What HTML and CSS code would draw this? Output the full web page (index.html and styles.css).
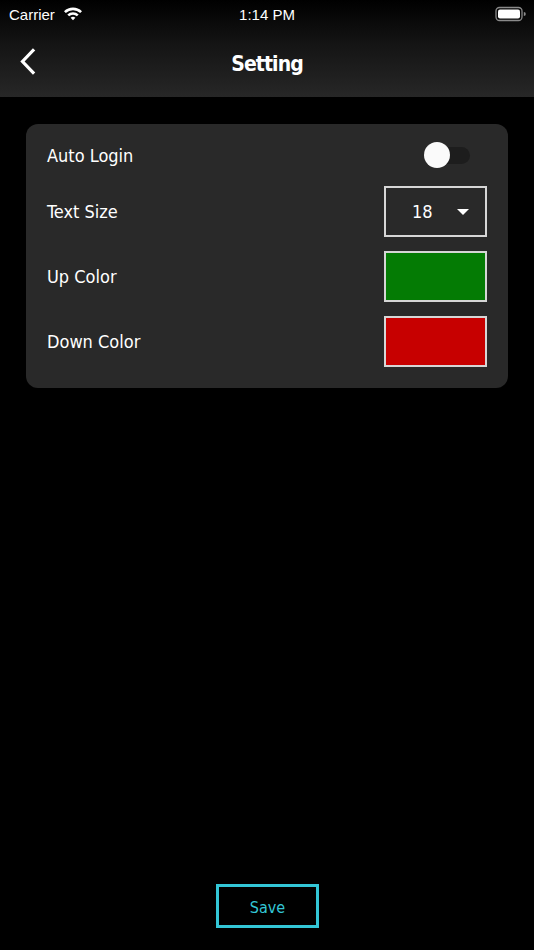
FILE: index.html
```html
<!DOCTYPE html>
<html>
<head>
<meta charset="utf-8">
<link rel="stylesheet" href="styles.css">
</head>
<body>
<div class="app">
  <header class="top">
    <div class="status">
      <div class="status-left">
        <span class="carrier">Carrier</span>
        <svg class="wifi" width="20" height="15" viewBox="0 0 20 15">
          <path d="M1 5.2 A13 13 0 0 1 19 5.2 L17.2 7 A10.5 10.5 0 0 0 2.8 7 Z" fill="#fff"/>
          <path d="M4.3 8.5 A8.3 8.3 0 0 1 15.7 8.5 L13.9 10.3 A5.8 5.8 0 0 0 6.1 10.3 Z" fill="#fff"/>
          <path d="M7.6 11.8 A3.6 3.6 0 0 1 12.4 11.8 L10 14.3 Z" fill="#fff"/>
        </svg>
      </div>
      <div class="time">1:14 PM</div>
      <div class="status-right">
        <svg class="battery" width="31" height="16" viewBox="0 0 31 16">
          <rect x="1" y="1.5" width="26" height="13" rx="3.5" fill="none" stroke="#8a8a8a" stroke-width="1.3"/>
          <rect x="3" y="3.5" width="22" height="9" rx="2" fill="#fff"/>
          <path d="M28.8 6 v4 a2 2 0 0 0 0 -4 z" fill="#8a8a8a"/>
        </svg>
      </div>
    </div>
    <div class="navbar">
      <svg class="back" width="18" height="28" viewBox="0 0 18 28">
        <path d="M14 2.5 L3.5 13.5 L14 24.5" fill="none" stroke="#fff" stroke-width="3.2" stroke-linecap="square"/>
      </svg>
      <h1 class="title">Setting</h1>
    </div>
  </header>

  <main class="content">
    <section class="card">
      <div class="row row-toggle">
        <span class="label">Auto Login</span>
        <div class="toggle"><div class="knob"></div></div>
      </div>
      <div class="row">
        <span class="label">Text Size</span>
        <div class="box select">
          <span class="select-value">18</span>
          <span class="caret"></span>
        </div>
      </div>
      <div class="row">
        <span class="label">Up Color</span>
        <div class="box swatch up"></div>
      </div>
      <div class="row">
        <span class="label">Down Color</span>
        <div class="box swatch down"></div>
      </div>
    </section>
  </main>

  <footer class="footer">
    <button class="save">Save</button>
  </footer>
</div>
</body>
</html>
```

FILE: styles.css
```css
* { box-sizing: border-box; }
html, body { margin: 0; padding: 0; background: #000; }
body {
  font-family: "DejaVu Sans Condensed", "DejaVu Sans", sans-serif;
  font-stretch: condensed;
  color: #fff;
}
.app {
  width: 534px;
  height: 950px;
  display: flex;
  flex-direction: column;
}
.top {
  height: 97px;
  background: linear-gradient(#000 0%, #141414 45%, #272727 100%);
}
.status {
  height: 28px;
  display: flex;
  align-items: center;
  justify-content: space-between;
  padding: 0 8px 0 9px;
  font-family: "Liberation Sans", Arial, sans-serif;
  font-stretch: normal;
  font-size: 15px;
  position: relative;
}
.status-left { display: flex; align-items: center; gap: 8px; }
.wifi { margin-top: -2px; }
.time {
  position: absolute;
  left: 0; right: 0;
  text-align: center;
  pointer-events: none;
}
.status-right { display: flex; align-items: center; }
.navbar {
  height: 69px;
  display: flex;
  align-items: center;
  position: relative;
  padding-left: 19px;
}
.back { margin-top: -2px; }
.title {
  position: absolute;
  left: 0; right: 0;
  margin: 0;
  text-align: center;
  font-size: 21px;
  font-weight: bold;
  letter-spacing: -0.9px;
  margin-top: 3px;
}
.content {
  flex: 1;
  padding: 27px 26px 0 26px;
}
.card {
  background: #292929;
  border-radius: 12px;
  padding: 14px 21px 21px 21px;
  display: flex;
  flex-direction: column;
  gap: 14px;
}
.row {
  display: flex;
  align-items: center;
  justify-content: space-between;
  height: 51px;
}
.row-toggle { height: 34px; }
.label { font-size: 18px; }
.toggle {
  width: 46px;
  height: 17px;
  background: #1d1d1d;
  border-radius: 9px;
  position: relative;
  margin-right: 17px;
}
.knob {
  position: absolute;
  left: 0;
  top: -5px;
  width: 26px;
  height: 26px;
  border-radius: 50%;
  background: #fafafa;
}
.box {
  width: 103px;
  height: 51px;
  border: 2px solid #d6d6d6;
}
.select {
  display: flex;
  align-items: center;
  padding-left: 26px;
  padding-right: 16px;
  justify-content: space-between;
}
.select-value { font-size: 18px; }
.caret {
  width: 0; height: 0;
  border-left: 6px solid transparent;
  border-right: 6px solid transparent;
  border-top: 6px solid #fff;
}
.swatch.up { background: #047b04; }
.swatch.down { background: #c70000; }
.footer {
  display: flex;
  justify-content: center;
  padding-bottom: 22px;
}
.save {
  width: 103px;
  height: 44px;
  background: #000;
  border: 3px solid #33c6d6;
  color: #33c6d6;
  font-family: "DejaVu Sans Condensed", "DejaVu Sans", sans-serif;
  font-stretch: condensed;
  font-size: 16px;
  padding: 2px 0 0 1px;
}
```
